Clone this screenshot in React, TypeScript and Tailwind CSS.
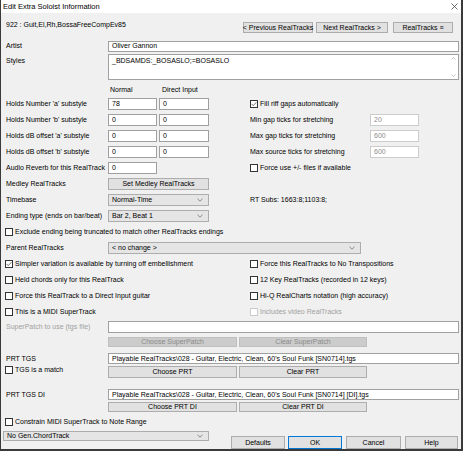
import React from 'react';

type BoxProps = { value?: string; className?: string; disabled?: boolean };

function TextBox({ value = '', className = '', disabled = false }: BoxProps) {
  const look = disabled ? 'border-[#cccccc] text-[#8c8c8c]' : 'border-[#a0a0a0] text-black';
  return (
    <div className={`bg-white border flex items-center pl-[3px] overflow-hidden whitespace-nowrap shrink-0 ${look} ${className}`}>
      {value}
    </div>
  );
}

function Btn({
  label,
  className = '',
  disabled = false,
  focused = false,
}: {
  label: string;
  className?: string;
  disabled?: boolean;
  focused?: boolean;
}) {
  const look = disabled
    ? 'bg-[#cccccc] border-[#bfbfbf] text-[#8a8a8a]'
    : focused
      ? 'bg-[#e1e1e1] border-[#0078d7]'
      : 'bg-[#e1e1e1] border-[#adadad]';
  return (
    <div className={`border flex items-center justify-center whitespace-nowrap shrink-0 ${look} ${className}`}>
      {label}
    </div>
  );
}

function Chevron() {
  return (
    <svg width="6" height="4" viewBox="0 0 6 4">
      <path d="M0.5 0.8 L3 3.2 L5.5 0.8" fill="none" stroke="#707070" strokeWidth="0.8" />
    </svg>
  );
}

function Combo({ value, className = '' }: { value: string; className?: string }) {
  return (
    <div
      className={`bg-[#e5e5e5] border border-[#adadad] flex items-center justify-between pl-[3px] pr-[5px] whitespace-nowrap shrink-0 ${className}`}
    >
      <span>{value}</span>
      <Chevron />
    </div>
  );
}

function Check({
  label,
  checked = false,
  disabled = false,
  className = '',
}: {
  label: string;
  checked?: boolean;
  disabled?: boolean;
  className?: string;
}) {
  return (
    <div className={`flex items-center whitespace-nowrap ${className}`}>
      <span
        className={`w-[8px] h-[8px] border bg-white flex items-center justify-center shrink-0 ${
          disabled ? 'border-[#cccccc]' : 'border-[#333333]'
        }`}
      >
        {checked && (
          <svg width="7" height="6" viewBox="0 0 7 6">
            <path d="M0.6 2.9 L2.6 4.9 L6.4 0.8" fill="none" stroke="#333333" strokeWidth="0.8" />
          </svg>
        )}
      </span>
      <span className={`ml-[2px] ${disabled ? 'text-[#a0a0a0]' : ''}`}>{label}</span>
    </div>
  );
}

const substyles = [
  { label: "Holds Number 'a' substyle", a: '78', b: '0' },
  { label: "Holds Number 'b' substyle", a: '0', b: '0' },
  { label: "Holds dB offset 'a' substyle", a: '0', b: '0' },
  { label: "Holds dB offset 'b' substyle", a: '0', b: '0' },
];

const stretch = [
  { label: 'Min gap ticks for stretching', value: '20' },
  { label: 'Max gap ticks for stretching', value: '600' },
  { label: 'Max source ticks for stretching', value: '600' },
];

const pairs = [
  { left: 'Simpler variation is available by turning off embellishment', leftOn: true, right: 'Force this RealTracks to No Transpositions' },
  { left: 'Held chords only for this RealTrack', right: '12 Key RealTracks (recorded in 12 keys)' },
  { left: 'Force this RealTrack to a Direct Input guitar', right: 'Hi-Q RealCharts notation (high accuracy)' },
  { left: 'This is a MIDI SuperTrack', right: 'Includes video RealTracks', rightOff: true },
];

export default function App() {
  return (
    <div className="w-[463px] h-[451px] bg-[#f0f0f0] border-l border-r-2 border-b-2 border-[#3a3a3a] font-['Liberation_Sans',Arial,sans-serif] text-[7px] leading-[8px] text-black flex flex-col overflow-hidden select-none">
      {/* title bar */}
      <div className="h-[13px] bg-white flex items-center justify-between pl-[2px] pr-[3px] shrink-0">
        <span className="text-[7.5px]">Edit Extra Soloist Information</span>
        <svg width="7" height="7" viewBox="0 0 7 7">
          <path d="M0.5 0.5 L6.5 6.5 M6.5 0.5 L0.5 6.5" stroke="#333333" strokeWidth="0.7" />
        </svg>
      </div>

      <div className="flex flex-col pl-[5px]">
        {/* rt name + nav buttons */}
        <div className="mt-[8px] h-[12px] flex items-start">
          <span className="w-[237px] mt-[0px]">922 : Guit,El,Rh,BossaFreeCompEv85</span>
          <Btn label="< Previous RealTracks" className="w-[70px] h-[11px] mt-[1px]" />
          <Btn label="Next RealTracks >" className="ml-[3px] w-[72px] h-[11px] mt-[1px]" />
          <Btn label="RealTracks ≡" className="ml-[5px] w-[60px] h-[11px] mt-[1px]" />
        </div>

        {/* artist */}
        <div className="mt-[7px] h-[12px] flex items-center">
          <span className="w-[102px]">Artist</span>
          <TextBox value="Oliver Gannon" className="w-[351px] h-[11px]" />
        </div>

        {/* styles */}
        <div className="mt-[2px] h-[26px] flex items-start">
          <span className="w-[102px] pt-[3px]">Styles</span>
          <div className="w-[351px] h-[26px] bg-white border border-[#a0a0a0] flex">
            <div className="flex-1 pl-[3px] pt-[2px]">_BDSAMDS:_BOSASLO;=BOSASLO</div>
            <div className="w-[9px] flex flex-col items-center justify-between py-[2px]">
              <svg width="5" height="3" viewBox="0 0 5 3">
                <path d="M0.5 2.5 L2.5 0.5 L4.5 2.5" fill="none" stroke="#b0b0b0" strokeWidth="0.7" />
              </svg>
              <svg width="5" height="3" viewBox="0 0 5 3">
                <path d="M0.5 0.5 L2.5 2.5 L4.5 0.5" fill="none" stroke="#b0b0b0" strokeWidth="0.7" />
              </svg>
            </div>
          </div>
        </div>

        {/* column headers */}
        <div className="mt-[3px] h-[13px] flex items-center">
          <span className="w-[104px]" />
          <span className="w-[52px]">Normal</span>
          <span>Direct Input</span>
        </div>

        {/* numeric rows with right-hand stretch settings */}
        {substyles.map((s, i) => (
          <div key={s.label} className="h-[16px] flex items-center">
            <div className="w-[244px] flex items-center">
              <span className="w-[102px]">{s.label}</span>
              <TextBox value={s.a} className="w-[49px] h-[12px]" />
              <TextBox value={s.b} className="ml-[2px] w-[50px] h-[12px]" />
            </div>
            {i === 0 ? (
              <Check label="Fill riff gaps automatically" checked />
            ) : (
              <div className="flex items-center">
                <span className="w-[120px]">{stretch[i - 1].label}</span>
                <TextBox value={stretch[i - 1].value} disabled className="w-[49px] h-[12px]" />
              </div>
            )}
          </div>
        ))}

        <div className="h-[16px] flex items-center">
          <div className="w-[244px] flex items-center">
            <span className="w-[102px]">Audio Reverb for this RealTrack</span>
            <TextBox value="0" className="w-[49px] h-[12px]" />
          </div>
          <Check label="Force use +/- files if available" />
        </div>

        <div className="h-[16px] flex items-center">
          <span className="w-[102px]">Medley RealTracks</span>
          <Btn label="Set Medley RealTracks" className="w-[101px] h-[12px]" />
        </div>

        <div className="h-[16px] flex items-center">
          <div className="w-[244px] flex items-center">
            <span className="w-[102px]">Timebase</span>
            <Combo value="Normal-Time" className="w-[101px] h-[12px]" />
          </div>
          <span>RT Subs: 1663:8;1103:8;</span>
        </div>

        <div className="h-[16px] flex items-center">
          <span className="w-[102px]">Ending type (ends on bar/beat)</span>
          <Combo value="Bar 2, Beat 1" className="w-[101px] h-[12px]" />
        </div>

        <div className="h-[16px] flex items-center">
          <Check label="Exclude ending being truncated to match other RealTracks endings" className="ml-[-1px]" />
        </div>

        <div className="h-[16px] flex items-center">
          <span className="w-[102px]">Parent RealTracks</span>
          <Combo value="< no change >" className="w-[253px] h-[12px]" />
        </div>

        {pairs.map((p) => (
          <div key={p.left} className="h-[16px] flex items-center">
            <div className="w-[244px]">
              <Check label={p.left} checked={p.leftOn} className="ml-[-1px]" />
            </div>
            <Check label={p.right} disabled={p.rightOff} />
          </div>
        ))}

        {/* superpatch */}
        <div className="h-[13px] flex items-center">
          <span className="w-[102px] text-[#a0a0a0]">SuperPatch to use (tgs file)</span>
          <TextBox className="w-[351px] h-[12px]" />
        </div>
        <div className="mt-[4px] h-[10px] flex">
          <span className="w-[102px]" />
          <Btn label="Choose SuperPatch" disabled className="w-[129px] h-[10px]" />
          <Btn label="Clear SuperPatch" disabled className="ml-[2px] w-[128px] h-[10px]" />
        </div>

        {/* PRT tgs */}
        <div className="mt-[6px] h-[11px] flex items-center">
          <span className="w-[102px]">PRT TGS</span>
          <TextBox
            value="Playable RealTracks\028 - Guitar, Electric, Clean, 60's Soul Funk [SN0714].tgs"
            className="w-[351px] h-[11px]"
          />
        </div>
        <div className="mt-[2px] h-[12px] flex items-start">
          <div className="w-[102px]">
            <Check label="TGS is a match" className="ml-[-1px]" />
          </div>
          <Btn label="Choose PRT" className="w-[129px] h-[12px]" />
          <Btn label="Clear PRT" className="ml-[2px] w-[128px] h-[12px]" />
        </div>

        <div className="mt-[11px] h-[11px] flex items-center">
          <span className="w-[102px]">PRT TGS DI</span>
          <TextBox
            value="Playable RealTracks\028 - Guitar, Electric, Clean, 60's Soul Funk [SN0714] [DI].tgs"
            className="w-[351px] h-[11px]"
          />
        </div>
        <div className="mt-[2px] h-[10px] flex">
          <span className="w-[102px]" />
          <Btn label="Choose PRT DI" className="w-[129px] h-[10px]" />
          <Btn label="Clear PRT DI" className="ml-[2px] w-[128px] h-[10px]" />
        </div>

        <div className="mt-[4px] h-[12px] flex items-center">
          <Check label="Constrain MIDI SuperTrack to Note Range" className="ml-[-1px]" />
        </div>

        {/* footer */}
        <div className="mt-[3px] flex items-start">
          <Combo value="No Gen.ChordTrack" className="ml-[-3px] w-[206px] h-[10px]" />
          <Btn label="Defaults" className="ml-[22px] mt-[5px] w-[54px] h-[13px]" />
          <Btn label="OK" focused className="ml-[3px] mt-[5px] w-[54px] h-[13px]" />
          <Btn label="Cancel" className="ml-[4px] mt-[5px] w-[55px] h-[13px]" />
          <Btn label="Help" className="ml-[4px] mt-[5px] w-[53px] h-[13px]" />
        </div>
      </div>
    </div>
  );
}
